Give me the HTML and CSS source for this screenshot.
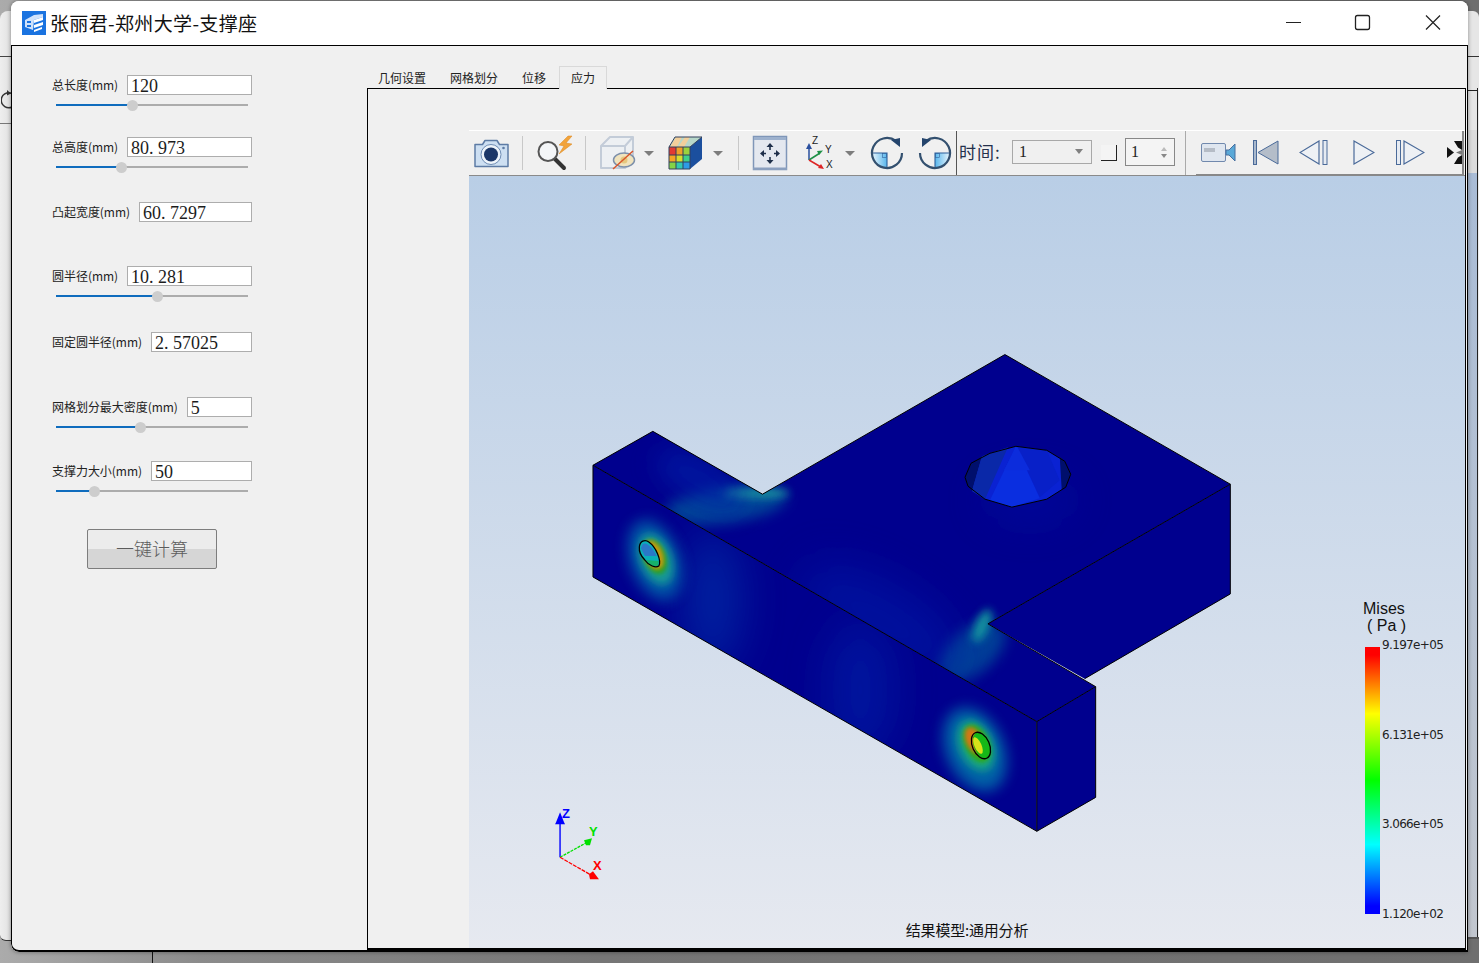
FILE: index.html
```html
<!DOCTYPE html>
<html lang="zh">
<head>
<meta charset="utf-8">
<title>张丽君-郑州大学-支撑座</title>
<link rel="stylesheet" href="styles.css">
</head>
<body>
<div class="desk-window"><svg class="desk-refresh" viewBox="0 0 12 24"><path d="M11 4.500A7.500 7.500 0 1 0 11 18" fill="none" stroke="#333" stroke-width="1.500"/><path d="M6 1l4 3.500-4 2z" fill="#333"/></svg></div>
<div class="desk-right"></div>
<div class="desk-line"></div>
<main class="window">
  <header class="titlebar">
    <svg class="app-icon" viewBox="0 0 24 24"><rect width="24" height="24" fill="#1a73e0"/><path d="M3 9l9-5 9-1v3l-9 3-1 10-8-3z" fill="#cfe2fb"/><path d="M12 9l9-3v3l-9 3zM12 14l9-3v3l-9 3zM12 19l8-3v2l-8 3z" fill="#fff"/><path d="M5 10h4v2H5zM5 14h4v2H5z" fill="#1a73e0"/></svg>
    <h1 class="title">张丽君-郑州大学-支撑座</h1>
    <div class="win-controls">
      <svg class="win-btn" viewBox="0 0 72 44"><path d="M32 21.500h15" stroke="#222" fill="none"/></svg>
      <svg class="win-btn" viewBox="0 0 72 44"><rect x="31.500" y="14.500" width="14" height="14" rx="2" stroke="#222" stroke-width="1.300" fill="none"/></svg>
      <svg class="win-btn" viewBox="0 0 72 44"><path d="M30 14.500l14 14M44 14.500l-14 14" stroke="#222" stroke-width="1.200" fill="none"/></svg>
    </div>
  </header>
  <div class="content">
    <aside class="params">
      <div class="field"><label class="field-label">总长度(mm)</label><div class="field-input">120</div></div>
      <div class="slider"><div class="slider-fill" style="width:40.1%"></div></div>
      <div class="field"><label class="field-label">总高度(mm)</label><div class="field-input">80. 973</div></div>
      <div class="slider"><div class="slider-fill" style="width:34.4%"></div></div>
      <div class="field"><label class="field-label">凸起宽度(mm)</label><div class="field-input">60. 7297</div></div>
      <div class="field"><label class="field-label">圆半径(mm)</label><div class="field-input">10. 281</div></div>
      <div class="slider"><div class="slider-fill" style="width:53.1%"></div></div>
      <div class="field"><label class="field-label">固定圆半径(mm)</label><div class="field-input">2. 57025</div></div>
      <div class="field"><label class="field-label">网格划分最大密度(mm)</label><div class="field-input">5</div></div>
      <div class="slider"><div class="slider-fill" style="width:44.3%"></div></div>
      <div class="field"><label class="field-label">支撑力大小(mm)</label><div class="field-input">50</div></div>
      <div class="slider"><div class="slider-fill" style="width:20.3%"></div></div>
      <button class="calc-btn"><span>一键计算</span></button>
    </aside>
    <section class="results">
      <nav class="tabs">
        <span class="tab">几何设置</span><span class="tab">网格划分</span><span class="tab">位移</span><span class="tab tab-active">应力</span>
      </nav>
      <div class="pane">
        <div class="viewer">
          <div class="toolbar">
            <svg class="t-icon i-camera" viewBox="0 0 36 36"><path d="M2 9.500h7.500l2.500-4h12l2.500 4H35v22H2z" fill="#cddff2" stroke="#5d7ba5" stroke-width="1.500" stroke-linejoin="round"/><circle cx="18" cy="19.500" r="10" fill="#eef4fa" stroke="#6f8db5"/><circle cx="18" cy="19.500" r="7" fill="#1c3768"/><circle cx="30.500" cy="13" r="1.300" fill="#5d7ba5"/></svg>
            <i class="t-sep"></i>
            <svg class="t-icon i-mag" viewBox="0 0 38 36"><path d="M19 24l9 9" stroke="#333" stroke-width="4" stroke-linecap="round"/><circle cx="12" cy="16.500" r="9.500" fill="#f4f6f8" stroke="#555" stroke-width="2"/><path d="M32 1l-9 9 5 1-5 8 13-10-6-1 6-7z" fill="#f2a33a" stroke="#d98620" stroke-width=".5"/></svg>
            <i class="t-sep t-sep2"></i>
            <svg class="t-icon i-cube" viewBox="0 0 42 36"><path d="M2 11l9-9h23v22l-8 9H2z" fill="#edf0f3" stroke="#c3ccd8" stroke-width="2" stroke-linejoin="round"/><path d="M2 11h24v22M26 11l8-9" fill="none" stroke="#c3ccd8" stroke-width="2"/><ellipse cx="25" cy="25" rx="10.500" ry="7" fill="#f0e3bd" stroke="#7d90ab" stroke-width="1.500"/><circle cx="25" cy="25" r="3.500" fill="#e6c77e"/><path d="M14 34l20-18" stroke="#d8562a" stroke-width="1.500"/></svg>
            <i class="t-arrow t-arrow-cube"></i>
            <svg class="t-icon i-rubik" viewBox="0 0 36 36"><path d="M7 2h27l-12 10H1z" fill="#b7d7c9"/><path d="M8 2l-6 10h7l5-10zM17 2l-7 10h6l6-10z" fill="#f2cf9b"/><rect x="1" y="12" width="21" height="22" fill="#ffd22e"/><rect x="1" y="12" width="7" height="8" fill="#e23b33"/><rect x="8" y="12" width="7" height="8" fill="#f0a028"/><rect x="15" y="12" width="7" height="8" fill="#9bd23c"/><rect x="1" y="20" width="7" height="7" fill="#f5a623"/><rect x="8" y="20" width="7" height="7" fill="#d5df2e"/><rect x="15" y="20" width="7" height="7" fill="#3fd08a"/><rect x="1" y="27" width="7" height="7" fill="#83d347"/><rect x="8" y="27" width="7" height="7" fill="#32c9b0"/><rect x="15" y="27" width="7" height="7" fill="#2e9be6"/><path d="M22 12L34 2v22l-12 10z" fill="#1b4f9e"/><path d="M1 12h21v22H1zM1 20h21M1 27h21M8 12v22M15 12v22M22 12L34 2H7L1 12" fill="none" stroke="#33415c"/></svg>
            <i class="t-arrow t-arrow-rubik"></i>
            <i class="t-sep t-sep3"></i>
            <svg class="t-icon i-move" viewBox="0 0 36 36"><rect x="1.500" y="1.500" width="33" height="33" fill="#e4e8ef" stroke="#7f96b8" stroke-width="1.500"/><rect x="2" y="2" width="32" height="3" fill="#9db1cd"/><rect x="1" y="32.500" width="34" height="2.500" fill="#8ba0bf"/><path d="M18 11v4M18 22v4M10 18.500h4M22 18.500h4" stroke="#1f2f4a" stroke-width="1.600"/><path d="M18 8l-3.500 4h7zM18 29l-3.500-4h7zM8 18.500l4-3.500v7zM28 18.500l-4-3.500v7z" fill="#1f2f4a"/></svg>
            <svg class="t-icon i-axes" viewBox="0 0 36 36"><path d="M5 25V12" stroke="#2a4f9e" stroke-width="1.500"/><path d="M5 25l11-7" stroke="#1e9045" stroke-width="1.500"/><path d="M5 25l11 6.500" stroke="#dd2525" stroke-width="1.500"/><path d="M5 8l-3 6h6z" fill="#2a4f9e"/><path d="M19 15.500l-6 .5 2 4z" fill="#1e9045"/><path d="M20 34l-3-5-3 4z" fill="#dd2525"/><text x="8" y="9" class="axis-t">Z</text><text x="21" y="18" class="axis-t">Y</text><text x="22" y="33" class="axis-t">X</text></svg>
            <i class="t-arrow t-arrow-axes"></i>
            <svg class="t-icon i-rot" viewBox="0 0 34 36"><defs><linearGradient id="wedgeA" x1="0" y1="0" x2="1" y2="0"><stop offset="0" stop-color="#eaf6fd"/><stop offset="1" stop-color="#58b6ec"/></linearGradient></defs><path d="M2 18h15v15A15 15 0 0 1 2 18z" fill="url(#wedgeA)"/><path d="M2 18h15v15" fill="none" stroke="#2d5f9a" stroke-width="1.100"/><rect x="12.500" y="18.500" width="4" height="4" fill="none" stroke="#2d5f9a" stroke-width=".6"/><path d="M26 6A15 15 0 1 0 32 18" fill="none" stroke="#33506f" stroke-width="2.200"/><path d="M21 5l9-2v9z" fill="#24446c"/></svg>
            <svg class="t-icon i-rot2" viewBox="0 0 34 36"><defs><linearGradient id="wedgeB" x1="1" y1="0" x2="0" y2="0"><stop offset="0" stop-color="#eaf6fd"/><stop offset="1" stop-color="#58b6ec"/></linearGradient></defs><path d="M32 18H17v15A15 15 0 0 0 32 18z" fill="url(#wedgeB)"/><path d="M32 18H17v15" fill="none" stroke="#2d5f9a" stroke-width="1.100"/><rect x="17.500" y="18.500" width="4" height="4" fill="none" stroke="#2d5f9a" stroke-width=".6"/><path d="M8 6a15 15 0 1 1-6 12" fill="none" stroke="#33506f" stroke-width="2.200"/><path d="M13 5L4 3v9z" fill="#24446c"/></svg>
            <i class="t-sep t-sep-dark"></i>
            <span class="time-label">时间:</span>
            <div class="combo"><span>1</span><i class="combo-arrow"></i></div>
            <i class="check"></i>
            <div class="spin"><span>1</span><span class="spin-arrows"><i class="up"></i><i class="down"></i></span></div>
            <i class="t-sep t-sep4"></i>
            <div class="player">
              <svg class="p-cam" viewBox="0 0 35 19"><rect x=".500" y=".500" width="24" height="18" rx="1.500" fill="#dfe6ef" stroke="#7189ad"/><rect x="3" y="5" width="11" height="4" fill="#b5bcc6"/><path d="M25 7h3l6-6v17l-6-6h-3z" fill="#5aa9d8" stroke="#466f9f"/></svg>
              <svg class="p-first" viewBox="0 0 26 25"><rect x=".500" y=".500" width="3" height="24" fill="#a9b8cc" stroke="#4a6a99"/><path d="M25 1v23L5 12.500z" fill="#b4bdc9" stroke="#4a6a99"/></svg>
              <svg class="p-prev" viewBox="0 0 29 25"><path d="M20 1v23L1 12.500z" fill="#eef1f5" stroke="#4a6a99" stroke-width="1.200"/><rect x="24" y=".500" width="4" height="24" fill="#e6ebf2" stroke="#4a6a99"/></svg>
              <svg class="p-play" viewBox="0 0 22 25"><path d="M1 1v23l20-11.500z" fill="#eef1f5" stroke="#4a6a99" stroke-width="1.200"/></svg>
              <svg class="p-next" viewBox="0 0 29 25"><rect x=".500" y=".500" width="4" height="24" fill="#e6ebf2" stroke="#4a6a99"/><path d="M8 1v23l20-11.500z" fill="#eef1f5" stroke="#4a6a99" stroke-width="1.200"/></svg>
              <svg class="p-cut" viewBox="0 0 15 25"><path d="M0 7l7 5.500L0 18z" fill="#111"/><path d="M7 1h8v9l-4-2.500zM7 24h8v-9l-4 2.500z" fill="#111"/><path d="M9 12.500l6-2.500v5z" fill="#777"/></svg>
            </div>
          </div>
          <div class="canvas">
            <svg class="model" viewBox="469 175 996 774">
              <defs>
                <clipPath id="clipTop"><path d="M592 465L652 431 762 494 1005 354 1231 484 988 624 1096 687 1037 722z"/></clipPath>
                <clipPath id="clipFront"><path d="M592 465L1037 722V832L592 577z"/></clipPath>
                <filter id="b2" x="-60%" y="-60%" width="220%" height="220%"><feGaussianBlur stdDeviation="2"/></filter>
                <filter id="b4" x="-80%" y="-80%" width="260%" height="260%"><feGaussianBlur stdDeviation="4"/></filter>
                <filter id="b7" x="-100%" y="-100%" width="300%" height="300%"><feGaussianBlur stdDeviation="7"/></filter>
                <filter id="b12" x="-100%" y="-100%" width="300%" height="300%"><feGaussianBlur stdDeviation="12"/></filter>
                <filter id="b20" x="-150%" y="-150%" width="400%" height="400%"><feGaussianBlur stdDeviation="20"/></filter>
              </defs>
              <g clip-path="url(#clipTop)">
                <rect x="580" y="340" width="660" height="390" fill="#00008e"/>
                <ellipse cx="1030" cy="500" rx="46" ry="22" fill="#0012a8" opacity=".45" filter="url(#b20)"/>
                <ellipse cx="725" cy="505" rx="62" ry="18" fill="#00629c" opacity=".7" filter="url(#b7)" transform="rotate(-8 725 505)"/>
                <ellipse cx="755" cy="493" rx="34" ry="5" fill="#1fa0a0" opacity=".9" filter="url(#b4)"/>
                <ellipse cx="972" cy="652" rx="40" ry="22" fill="#006a9e" opacity=".6" filter="url(#b7)" transform="rotate(-40 972 652)"/>
                <ellipse cx="982" cy="626" rx="7" ry="18" fill="#14a3a0" opacity=".9" filter="url(#b4)" transform="rotate(25 982 626)"/>
                <ellipse cx="880" cy="620" rx="90" ry="40" fill="#001aa8" opacity=".55" filter="url(#b20)" transform="rotate(30 880 620)"/>
                <ellipse cx="700" cy="480" rx="50" ry="22" fill="#0024a8" opacity=".6" filter="url(#b12)" transform="rotate(30 700 480)"/>
              </g>
              <path d="M988 624L1231 484V594L1085 679z" fill="#00008e"/>
              <path d="M1037 722L1096 687V798L1037 832z" fill="#00008e"/>
              <g clip-path="url(#clipFront)">
                <rect x="580" y="460" width="470" height="380" fill="#00008e"/>
                <ellipse cx="712" cy="600" rx="30" ry="70" fill="#003fb0" opacity=".5" filter="url(#b20)"/>
                <ellipse cx="860" cy="690" rx="34" ry="70" fill="#0024a8" opacity=".6" filter="url(#b20)"/>
                <ellipse cx="654" cy="560" rx="25" ry="42" fill="#005aa8" opacity=".9" filter="url(#b7)" transform="rotate(-20 654 560)"/>
                <ellipse cx="655" cy="559" rx="16" ry="27" fill="#129a96" filter="url(#b4)" transform="rotate(-22 655 559)"/>
                <ellipse cx="654" cy="557" rx="11" ry="18" fill="#2a9e28" filter="url(#b2)" transform="rotate(-22 654 557)"/>
                <ellipse cx="653" cy="555" rx="9" ry="15" fill="#c99a10" filter="url(#b2)" transform="rotate(-22 653 555)"/>
                <ellipse cx="975" cy="750" rx="29" ry="44" fill="#0066a8" opacity=".95" filter="url(#b7)" transform="rotate(-24 975 750)"/>
                <ellipse cx="976" cy="746" rx="17" ry="27" fill="#13a585" filter="url(#b4)" transform="rotate(-24 976 746)"/>
                <ellipse cx="977" cy="744" rx="12" ry="20" fill="#2fa81a" filter="url(#b2)" transform="rotate(-24 977 744)"/>
                <ellipse cx="974" cy="741" rx="8" ry="14" fill="#d67618" filter="url(#b2)" transform="rotate(-24 974 741)"/>
              </g>
              <path d="M965 477L971 463 990 453 1016 446 1047 450 1065 461 1071 474 1066 487 1047 499 1012 507 985 499 968 486z" fill="#0a22d2"/>
              <path d="M965 477L971 463 982 456 972 491 968 486z" fill="#000f6c"/>
              <path d="M1071 474L1065 461 1060 456 1062 490 1066 487z" fill="#000f6c"/>
              <path d="M982 456L990 453 1008 447 985 499 972 491z" fill="#0a28a8"/>
              <path d="M1016 446L1040 498 1012 507 990 500z" fill="#0a2ee0"/>
              <path d="M1016 446L1047 450 1060 480 1040 497z" fill="#0820c8"/>
              <path d="M1004 470h26l-13-24z" fill="#0c2cdc"/>
              <path d="M965 477L971 463 990 453 1016 446 1047 450 1065 461 1071 474 1066 487 1047 499 1012 507 985 499 968 486z" fill="none" stroke="#000" stroke-width="1"/>
              <path d="M638.500 547C639 541 644 539 648 542 655 547 661 560 658 566 655 568 648 566 644 560 640 556 638 552 638.500 547z" fill="#0ab0b8"/>
              <path d="M642 544C646 541 653 549 656 556L644 556 640 548z" fill="#2a78c8"/>
              <path d="M645 560L658 561 657 566 650 566z" fill="#16b06a"/>
              <path d="M638.500 547C639 541 644 539 648 542 655 547 661 560 658 566 655 568 648 566 644 560 640 556 638 552 638.500 547z" fill="none" stroke="#000" stroke-width="1.300"/>
              <ellipse cx="982" cy="746" rx="8" ry="14" fill="#16b818" transform="rotate(-24 982 746)"/>
              <ellipse cx="978" cy="746" rx="3.500" ry="9" fill="#d8e21a" transform="rotate(-24 978 746)"/>
              <ellipse cx="981" cy="746" rx="8.500" ry="14" fill="none" stroke="#000" stroke-width="1.300" transform="rotate(-24 981 746)"/>
              <path d="M592 465L652 431 762 494 1005 354 1231 484V594L1085 679M1096 687V798L1037 832 592 577V465L1037 722V832M1037 722L1096 687 988 624 1231 484" fill="none" stroke="#000" stroke-width="1"/>
              <g class="triad">
                <path d="M559 858V818" stroke="#0000ff" stroke-width="1.400"/>
                <path d="M559 858L588 842" stroke="#00e000" stroke-width="1.300" stroke-dasharray="3 1"/>
                <path d="M559 858L592 877" stroke="#ff0000" stroke-width="1.300" stroke-dasharray="4 1"/>
                <path d="M559 813l-4 10-1 2h10l-1-2z" fill="#0000ff"/>
                <path d="M591 839l-8 2 2 5 4 0z" fill="#00e000"/>
                <path d="M598 880l-6-8-4 3 1 5z" fill="#ff0000"/>
                <text x="561" y="819" class="triad-t" fill="#0000ff">Z</text>
                <text x="588" y="837" class="triad-t" fill="#00e000">Y</text>
                <text x="592" y="871" class="triad-t" fill="#ff0000">X</text>
              </g>
            </svg>
            <div class="legend">
              <div class="legend-title">Mises</div>
              <div class="legend-title legend-unit">( Pa )</div>
              <div class="legend-body">
                <div class="legend-bar"></div>
                <div class="legend-ticks"><span>9.197e+05</span><span>6.131e+05</span><span>3.066e+05</span><span>1.120e+02</span></div>
              </div>
            </div>
            <div class="caption">结果模型:通用分析</div>
          </div>
        </div>
      </div>
    </section>
  </div>
</main>
</body>
</html>
```
FILE: styles.css
```css
* { box-sizing: border-box; }
html, body { margin: 0; height: 100%; }
body {
  position: relative;
  width: 1479px;
  height: 963px;
  overflow: hidden;
  background: linear-gradient(90deg, #ababab 0, #8b8b8b 200px, #767676 600px, #6f6f6f 100%);
  font-family: "Noto Sans CJK SC", "Noto Sans", sans-serif;
}
.desk-window {
  position: absolute;
  left: 0; top: 11px;
  width: 14px; height: 930px;
  background: linear-gradient(90deg, #eeeeee, #e2e2e2 70%, #c8c8c8);
  border-bottom: 1px solid #333;
  border-radius: 8px 0 0 6px;
}
.desk-window::before {
  content: "";
  position: absolute;
  left: 0; right: 0; top: 45px; height: 66px;
  border-top: 1px solid #444;
  border-bottom: 1px solid #777;
}
.desk-refresh { position: absolute; left: 1px; top: 78px; width: 12px; height: 24px; }
.desk-right {
  position: absolute;
  left: 1464px; top: 11px;
  width: 15px; height: 928px;
  background: linear-gradient(#e6e6e6 0, #e6e6e6 119px, #dcdcdc 119px, #dcdcdc 162px, #a9bcd6 162px, #c2c7cf 100%);
  border-radius: 0 6px 0 0;
  border-bottom: 2px solid #555;
}
.desk-right::before {
  content: "";
  position: absolute;
  left: 0; right: 0; top: 45px; height: 33px;
  border-top: 1px solid #333;
  border-bottom: 1px solid #222;
}
.desk-right::after {
  content: "";
  position: absolute;
  left: 13px; top: 77px; bottom: 0; width: 2px;
  border-left: 1px solid #222;
  background: #ececec;
}
.desk-line { position: absolute; left: 152px; top: 950px; width: 1px; height: 13px; background: #111; }
.window {
  position: absolute;
  left: 11px; top: 1px;
  width: 1457px; height: 951px;
  display: flex;
  flex-direction: column;
  border-radius: 8px 8px 0 8px;
  overflow: hidden;
  background: #fff;
  box-shadow: 0 0 4px rgba(0,0,0,.4);
}
.titlebar {
  flex: 0 0 45px;
  display: flex;
  align-items: center;
  background: #fff;
  padding-left: 11px;
  border-bottom: 1px solid #000;
}
.app-icon { width: 24px; height: 24px; flex: none; }
.title { margin: 0 0 0 4px; font-size: 19px; line-height: 24px; font-weight: 400; color: #111; white-space: nowrap; letter-spacing: .35px; }
.win-controls { margin-left: auto; display: flex; }
.win-btn { width: 72px; height: 44px; display: block; }
.win-btn:first-child { margin-right: -2px; }
.content {
  flex: 1;
  display: flex;
  min-height: 0;
  background: #f0f0f0;
  border-left: 1px solid #000;
  border-right: 1px solid #000;
  border-bottom: 2px solid #000;
  border-radius: 0 0 0 8px;
}
.params { flex: 0 0 355px; display: flex; flex-direction: column; align-items: flex-start; padding: 29px 0 0 40px; }
.field { width: 200px; display: flex; align-items: center; gap: 9px; height: 20px; flex: none; }
.field-label { font-size: 12px; line-height: 16px; color: #222; white-space: nowrap; letter-spacing: -.04px; }
.field-input {
  flex: 1;
  height: 20px;
  border: 1px solid #adadad;
  background: #fff;
  font: 18px/20px "Liberation Serif", serif;
  color: #1c1c1c;
  padding-left: 3px;
  overflow: hidden;
  white-space: nowrap;
}
.slider { flex: none; width: 192px; height: 2px; margin: 9px 0 5px 4px; background: #acacac; }
.slider-fill { position: relative; height: 2px; background: #0f6cbd; }
.slider-fill::after {
  content: "";
  position: absolute;
  right: -5px; top: -4px;
  width: 11px; height: 11px;
  border-radius: 50%;
  background: #cdcdcd;
}
.params > :nth-child(3) { margin-top: 26px; }
.params > :nth-child(5) { margin-top: 29px; }
.params > :nth-child(6) { margin-top: 44px; }
.params > :nth-child(8) { margin-top: 30px; }
.params > :nth-child(9) { margin-top: 45px; }
.params > :nth-child(11) { margin-top: 28px; }
.calc-btn {
  display: block;
  flex: none;
  width: 130px; height: 40px;
  margin: 32px 0 0 35px;
  padding: 0 0 2px;
  border: 1px solid #7d7d7d;
  border-radius: 2px;
  background: linear-gradient(#ececec 50%, #d6d6d6 50%);
  font: 300 18px/36px "Noto Sans CJK SC", sans-serif;
  color: #5c5c5c;
}
.results { flex: 1; min-width: 0; display: flex; flex-direction: column; }
.tabs { flex: 0 0 42px; display: flex; align-items: flex-end; margin-left: -1px; position: relative; }
.tab { height: 23px; padding: 0 12px; font-size: 12px; line-height: 25px; color: #222; }
.tab-active {
  margin: 0 0 -1px 1px;
  padding: 0 11px;
  border: 1px solid #d9d9d9;
  border-bottom: 0;
  line-height: 21px;
  background: #f0f0f0;
  position: relative;
  z-index: 1;
}
.pane {
  flex: 1;
  min-height: 0;
  margin: 0 1px 0 0;
  padding: 41px 0 0 101px;
  border: 1px solid #000;
  border-bottom-width: 2px;
}
.viewer { height: 100%; display: flex; flex-direction: column; }
.toolbar {
  flex: 0 0 45px;
  display: flex;
  align-items: center;
  background: #f0f0f0;
  border-top: 1px solid #fff;
  border-bottom: 1px solid #8a8a8a;
}
.t-icon { display: block; flex: none; height: 36px; }
.t-sep { flex: none; width: 1px; height: 34px; background: #c8c8c8; margin-left: 13px; }
.i-camera { width: 36px; margin-left: 4px; }
.i-mag { width: 38px; margin-left: 13px; }
.t-sep2 { margin-left: 11px; }
.i-cube { width: 42px; margin-left: 13px; }
.t-arrow {
  flex: none;
  width: 0; height: 0;
  border-left: 5px solid transparent;
  border-right: 5px solid transparent;
  border-top: 5px solid #7d7d7d;
  margin-left: 3px;
}
.i-rubik { width: 36px; margin-left: 14px; }
.t-arrow-rubik { margin-left: 9px; }
.t-sep3 { margin-left: 15px; }
.i-move { width: 36px; margin-left: 13px; }
.i-axes { width: 36px; margin-left: 16px; }
.t-arrow-axes { margin-left: 5px; }
.i-rot { width: 34px; margin-left: 15px; }
.i-rot2 { width: 34px; margin-left: 14px; }
.axis-t { font: 10px "Liberation Sans", sans-serif; fill: #222; }
.t-sep-dark { height: 44px; margin-left: 4px; background: #555; }
.time-label { flex: none; width: 43px; margin: -2px 0 0 2px; font-size: 17px; line-height: 20px; letter-spacing: 1px; color: #24304c; white-space: nowrap; }
.combo {
  flex: none;
  width: 80px; height: 24px;
  margin: -2px 0 0 10px;
  border: 1px solid #a8a8a8;
  display: flex; align-items: center; justify-content: space-between;
  padding: 0 8px 0 6px;
  font: 16px "Liberation Serif", serif;
  color: #222;
}
.combo-arrow { width: 0; height: 0; border: 4px solid transparent; border-top: 5px solid #808080; margin-top: 3px; }
.check { flex: none; width: 16px; height: 16px; margin: -1px 0 0 9px; background: #f4f4f4; border-right: 1px solid #222; border-bottom: 1px solid #222; }
.spin {
  flex: none;
  width: 50px; height: 28px;
  margin: -2px 0 0 8px;
  border: 1px solid #888;
  background: #f4f4f4;
  display: flex; align-items: center; justify-content: space-between;
  padding: 0 7px 0 5px;
  font: 16px "Liberation Serif", serif;
  color: #222;
}
.spin-arrows { display: flex; flex-direction: column; gap: 3px; }
.spin-arrows i { display: block; width: 0; height: 0; border-left: 3px solid transparent; border-right: 3px solid transparent; }
.spin-arrows .up { border-bottom: 4px solid #bbb; }
.spin-arrows .down { border-top: 4px solid #888; }
.t-sep4 { height: 44px; margin-left: 10px; background: #aaa; }
.player {
  flex: 1;
  min-width: 0;
  align-self: stretch;
  margin-left: 10px;
  margin-right: 1px;
  display: flex;
  align-items: center;
  background: #f0f0f0;
  border-bottom: 2px solid #888;
  border-right: 2px solid #888;
  margin-bottom: -1px;
}
.player svg { display: block; flex: none; height: 25px; }
.player .p-cam { width: 35px; height: 19px; margin-left: 5px; }
.p-first { width: 26px; margin-left: 17px; }
.p-prev { width: 29px; margin-left: 20px; }
.p-play { width: 22px; margin-left: 25px; }
.p-next { width: 29px; margin-left: 21px; }
.p-cut { width: 15px; margin-left: 22px; }
.canvas {
  flex: 1;
  min-height: 0;
  position: relative;
  background: linear-gradient(#b9cee6, #e6e9f0);
}
.model { position: absolute; inset: 0; width: 100%; height: 100%; display: block; }
.triad-t { font: 700 13px "Liberation Sans", sans-serif; }
.legend { position: absolute; left: 894px; top: 424px; }
.legend-title { font: 16px/18px "Liberation Sans", sans-serif; color: #111; white-space: nowrap; }
.legend-unit { margin: -1px 0 12px 4px; height: 18px; }
.legend-body { display: flex; gap: 2px; margin-left: 2px; align-items: flex-start; }
.legend-bar {
  flex: none;
  width: 15px; height: 267px;
  background: linear-gradient(#f00 0, #f00 3%, #ff0 25%, #0f0 50%, #0ff 74%, #00f 97%, #00f 100%);
}
.legend-ticks {
  height: 283px;
  flex: none;
  display: flex; flex-direction: column; justify-content: space-between;
  font: 12px/14px "DejaVu Sans", sans-serif;
  letter-spacing: -.65px;
  color: #222;
  margin: -9px 0 0;
}
.caption { position: absolute; left: 0; right: 0; bottom: 9px; text-align: center; font-size: 15px; letter-spacing: -.2px; line-height: 18px; color: #111; }
```
